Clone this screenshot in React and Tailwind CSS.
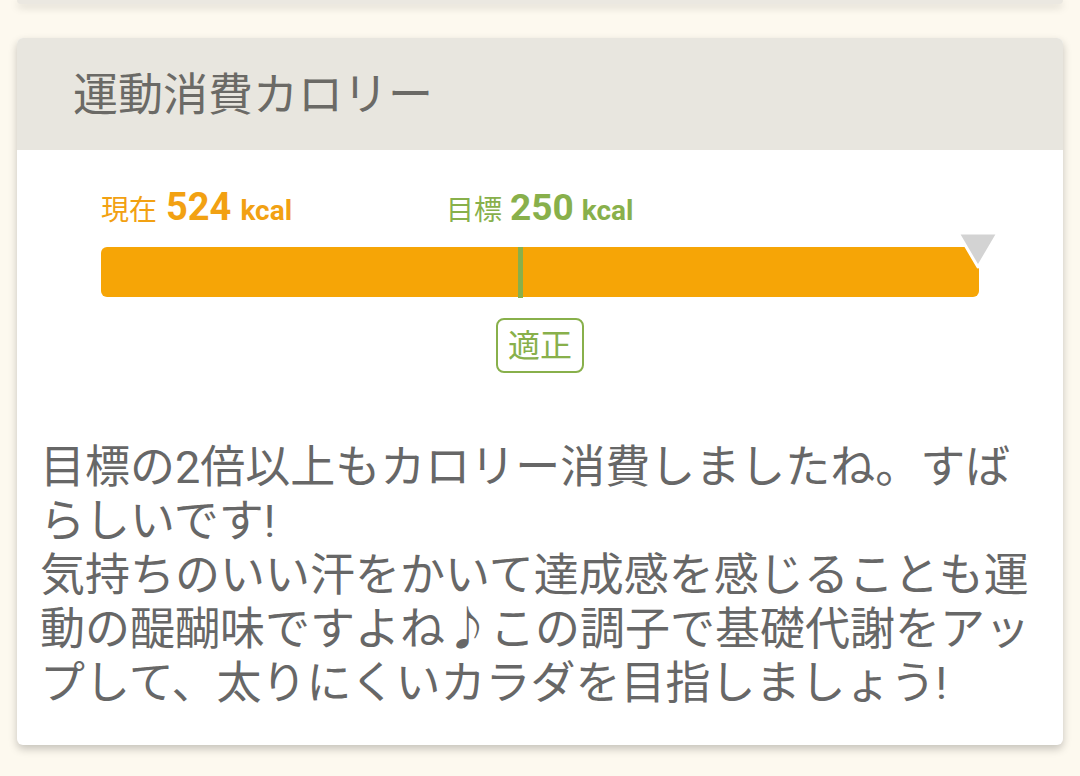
export default function App() {
  const current = 524;
  const target = 250;
  const targetPct = (target / current) * 100;

  return (
    <div
      className="min-h-[776px] bg-[#fdf9ef] px-[17px]"
      style={{ fontFamily: 'Roboto, "Noto Sans CJK JP", sans-serif' }}
    >
      {/* bottom edge of the previous card */}
      <div className="h-[4px] rounded-b-md bg-[#ebe8e1] shadow-[0_3px_8px_rgba(0,0,0,0.18)]" />

      <section className="mt-[34px] overflow-hidden rounded-md bg-white shadow-[0_4px_9px_rgba(0,0,0,0.22)]">
        <header className="flex h-[112px] items-center bg-[#e8e6df] pl-[56px] pt-[3px]">
          <h2 className="text-[45px] leading-none text-[#6b6a66]">運動消費カロリー</h2>
        </header>

        <div className="pt-[39px] pb-[34px]">
          <div className="mx-[84px]">
            <div className="flex h-[36px] items-baseline leading-[36px]">
              <div className="flex w-[345px] items-baseline text-[#f2a112]">
                <span className="text-[28px]">現在</span>
                <span className="ml-[9px] text-[38px] font-bold">{current}</span>
                <span className="ml-[9px] text-[28px] font-bold">kcal</span>
              </div>
              <div className="flex items-baseline text-[#88b04b]">
                <span className="text-[28px]">目標</span>
                <span className="ml-[8px] text-[37px] font-bold">{target}</span>
                <span className="ml-[8px] text-[28px] font-bold">kcal</span>
              </div>
            </div>

            <div className="relative mt-[22px] h-[50px] rounded-md bg-[#f6a506]">
              <div
                className="absolute top-0 h-[51px] w-[5px] bg-[#88b04b]"
                style={{ left: `calc(${targetPct}% - 2px)` }}
              />
              <svg
                className="absolute right-[-21px] top-[-16px]"
                width="44"
                height="40"
                viewBox="0 0 44 40"
              >
                <polygon
                  points="2,2 42,2 22,36"
                  fill="#d3d3d3"
                  stroke="#ffffff"
                  strokeWidth="3"
                  strokeLinejoin="round"
                />
              </svg>
            </div>

            <div className="mt-[21px] flex justify-center">
              <div className="flex h-[55px] items-center rounded-lg border-2 border-[#88b04b] px-[10px] text-[32px] leading-none text-[#88b04b]">
                適正
              </div>
            </div>
          </div>

          <p className="mt-[68px] ml-[23px] w-[1000px] text-[45px] leading-[54px] text-[#676767]">
            目標の2倍以上もカロリー消費しましたね。すばらしいです!
            <br />
            気持ちのいい汗をかいて達成感を感じることも運動の醍醐味ですよね♪この調子で基礎代謝をアップして、太りにくいカラダを目指しましょう!
          </p>
        </div>
      </section>
    </div>
  );
}
